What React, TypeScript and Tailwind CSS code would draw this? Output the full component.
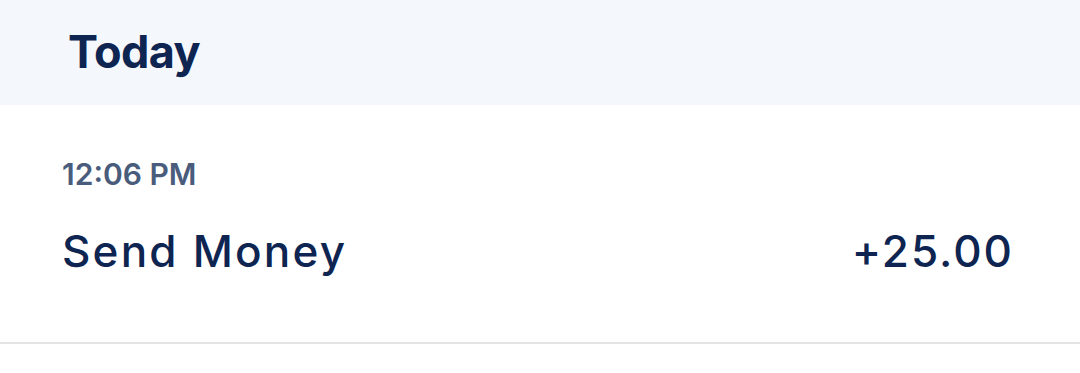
export default function App() {
  return (
    <div className="w-[1080px] h-[373px] bg-white" style={{ fontFamily: 'Inter, Lato, sans-serif' }}>
      <div className="h-[105px] bg-[#f4f8fc] flex items-center pl-[68px] pb-[2px]">
        <span className="text-[45px] font-bold text-[#0e2451] leading-none tracking-[-0.6px]">Today</span>
      </div>
      <div className="pl-[62px] pr-[66px] pt-[54px] h-[239px] border-b-2 border-[#e4e4e4]">
        <div className="text-[30px] font-semibold text-[#4a5c7c] leading-none">12:06 PM</div>
        <div className="flex justify-between items-center mt-[40px]">
          <span className="text-[44px] font-medium text-[#0e2451] leading-none tracking-[2.2px]">Send Money</span>
          <span className="text-[44px] font-medium text-[#0e2451] leading-none tracking-[2px]">+25.00</span>
        </div>
      </div>
    </div>
  );
}
